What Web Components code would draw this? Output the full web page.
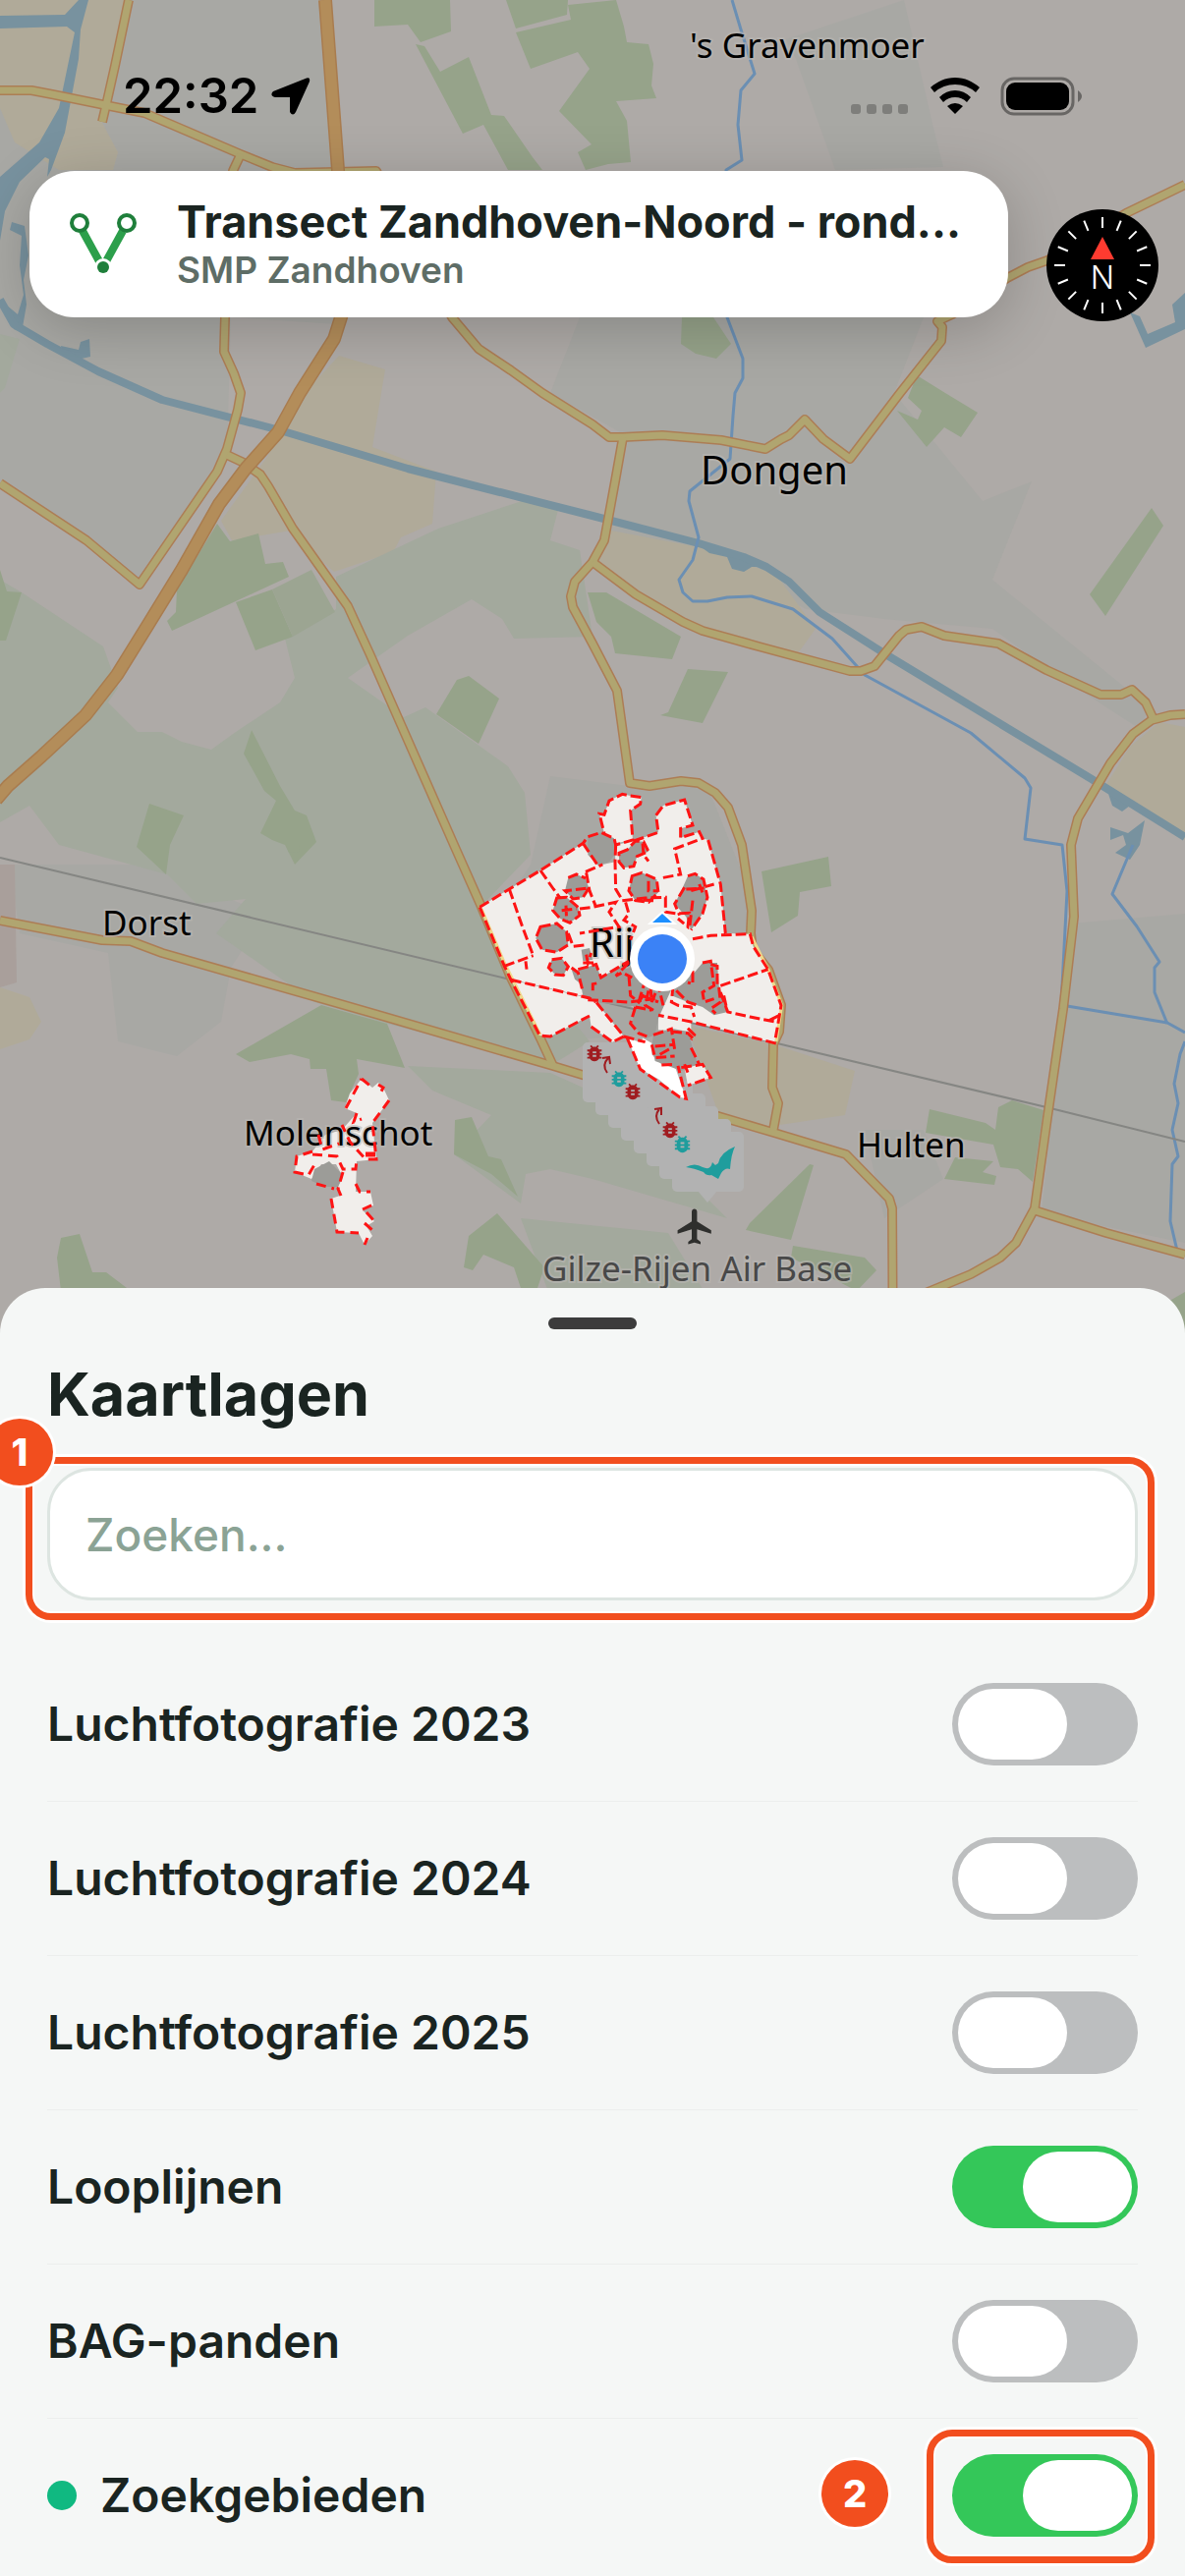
<!DOCTYPE html>
<html lang="nl">
<head>
<meta charset="utf-8">
<meta name="viewport" content="width=device-width, initial-scale=1">
<title>Kaartlagen</title>
<style>
    body {
        margin: 0;
        background: #f5f7f6;
        color: #1a2421;
        font-family: Inter, "Liberation Sans", sans-serif;
    }
</style>
</head>
<body>
<layers-screen>
    <survey-map slot="map"></survey-map>
    <status-bar slot="top" time="22:32"></status-bar>
    <project-card slot="header">
        Transect Zandhoven-Noord - rond...
        <span slot="client">SMP Zandhoven</span>
    </project-card>
    <map-compass slot="header"></map-compass>
    <bottom-sheet slot="sheet">
        <span slot="title">Kaartlagen</span>
        <callout-frame slot="search" number="1" style="--top: -11px; --right: -17px; --bottom: -20px; --left: -22px; --badge-x: -62px; --badge-y: -50px">
            <search-field placeholder="Zoeken..."></search-field>
        </callout-frame>
        <layer-row>Luchtfotografie 2023</layer-row>
        <layer-row>Luchtfotografie 2024</layer-row>
        <layer-row>Luchtfotografie 2025</layer-row>
        <layer-row on>Looplijnen</layer-row>
        <layer-row>BAG-panden</layer-row>
        <layer-row on dot="#10b981" callout="2">Zoekgebieden</layer-row>
    </bottom-sheet>
</layers-screen>

<script>
class BaseElement extends HTMLElement {
    constructor() {
        super();
        this.attachShadow({ mode: 'open' });
    }

    connectedCallback() {
        this.shadowRoot.innerHTML = this.render();
    }
}

class LayersScreen extends BaseElement {
    render() {
        return `
            <style>
                :host { display: block; overflow: hidden; }
                .stage { display: grid; grid-template-columns: minmax(0, 1fr); }
                .map, .overlay { grid-area: 1 / 1; }
                .overlay { display: flex; flex-direction: column; z-index: 1; }
                .header {
                    display: flex;
                    align-items: flex-start;
                    gap: 39px;
                    padding: 56px 27px 0 30px;
                }
                /* the sheet slides over the lower edge of the map */
                .sheet { position: relative; z-index: 2; margin-top: -89px; }
            </style>
            <div class="stage">
                <div class="map"><slot name="map"></slot></div>
                <div class="overlay">
                    <slot name="top"></slot>
                    <div class="header"><slot name="header"></slot></div>
                </div>
            </div>
            <div class="sheet"><slot name="sheet"></slot></div>
        `;
    }
}

class StatusBar extends BaseElement {
    render() {
        return `
            <style>
                :host {
                    display: flex;
                    justify-content: space-between;
                    align-items: center;
                    padding: 78px 104px 0 125px;
                    color: #000;
                }
                .group { display: flex; align-items: center; height: 40px; }
                .left { gap: 13px; }
                .right { gap: 21px; }
                time { font-size: 49px; line-height: 40px; font-weight: 600; }
                svg { display: block; }
            </style>
            <div class="group left">
                <time>${this.getAttribute('time')}</time>
                <svg width="40" height="40" viewBox="0 0 40 40">
                    <path d="M36 1.500Q40 0 39 5L25 36Q22 41 19 36V21H4Q-2 19 2 15Z"/>
                </svg>
            </div>
            <div class="group right">
                <svg width="60" height="40" viewBox="0 0 60 40" fill="#000" fill-opacity=".25">
                    <rect y="28" width="10" height="10" rx="3"/>
                    <rect x="16" y="28" width="10" height="10" rx="3"/>
                    <rect x="32" y="28" width="10" height="10" rx="3"/>
                    <rect x="48" y="28" width="10" height="10" rx="3"/>
                </svg>
                <svg width="50" height="40" viewBox="0 0 50 40">
                    <path d="M25 1C15 1 7 5 0 11L4 16Q13 8 25 8T46 16L50 11C43 5 35 1 25 1ZM25 14Q16 14 9 21L13 26Q18 21 25 21T37 26L41 21Q34 14 25 14ZM25 27Q21 27 17 30L25 38L33 30Q29 27 25 27Z"/>
                </svg>
                <svg width="84" height="40" viewBox="0 0 84 40">
                    <rect x="2" y="2" width="72" height="36" rx="12" fill="none" stroke="#000" stroke-opacity=".4" stroke-width="3"/>
                    <rect x="6" y="6" width="64" height="28" rx="9"/>
                    <path d="M79 14Q83 17 83 20T79 26Z" fill-opacity=".4"/>
                </svg>
            </div>
        `;
    }
}

class ProjectCard extends BaseElement {
    render() {
        return `
            <style>
                :host {
                    flex: 1;
                    min-width: 0;
                    display: flex;
                    align-items: center;
                    gap: 40px;
                    box-sizing: border-box;
                    height: 149px;
                    padding: 0 30px 0 40px;
                    border-radius: 46px;
                    background: #fff;
                    box-shadow: 0 12px 60px rgba(0, 0, 0, .2);
                }
                svg { flex: none; display: block; }
                .text { min-width: 0; }
                .title {
                    margin: 0;
                    font-size: 45px;
                    line-height: 52px;
                    font-weight: 700;
                    white-space: nowrap;
                    overflow: hidden;
                    text-overflow: ellipsis;
                }
                .client {
                    margin: 0;
                    font-size: 37px;
                    line-height: 46px;
                    font-weight: 600;
                    color: #5e6d66;
                }
            </style>
            <svg width="70" height="64" viewBox="0 0 70 64" fill="none">
                <path d="M14 18L31 49M55 18L38 49" stroke="#2c9f4b" stroke-width="8"/>
                <circle cx="11" cy="10" r="8" fill="#fff" stroke="#1f7f3b" stroke-width="4"/>
                <circle cx="59" cy="10" r="8" fill="#fff" stroke="#1f7f3b" stroke-width="4"/>
                <circle cx="35" cy="55" r="9" fill="#fff"/>
                <circle cx="35" cy="55" r="6" fill="#1f7f3b"/>
            </svg>
            <div class="text">
                <p class="title"><slot></slot></p>
                <p class="client"><slot name="client"></slot></p>
            </div>
        `;
    }
}

class MapCompass extends BaseElement {
    render() {
        const ticks = Array.from({ length: 16 }, (_, i) =>
            `<path d="M57 8V19" transform="rotate(${i * 22.5} 57 57)"/>`).join('');
        return `
            <style>
                :host { display: block; flex: none; padding-top: 39px; }
                button {
                    display: block;
                    padding: 0;
                    border: 0;
                    border-radius: 50%;
                    background: #000;
                }
                svg { display: block; }
                text { font: 300 32px Inter, "Liberation Sans", sans-serif; }
            </style>
            <button type="button" aria-label="Kompas">
                <svg width="114" height="114" viewBox="0 0 114 114">
                    <g stroke="#fff" stroke-width="2">${ticks}</g>
                    <path d="M57 28L69 51H45Z" fill="#ff3b30"/>
                    <text x="57" y="81" fill="#fff" text-anchor="middle">N</text>
                </svg>
            </button>
        `;
    }
}

class BottomSheet extends BaseElement {
    render() {
        return `
            <style>
                :host {
                    display: block;
                    padding: 30px 48px 3px;
                    border-radius: 46px 46px 0 0;
                    background: #f5f7f6;
                }
                .handle {
                    width: 90px;
                    height: 12px;
                    margin: 0 auto;
                    border-radius: 6px;
                    background: #3c3c3c;
                }
                h1 {
                    margin: 30px 0 38px;
                    font-size: 61px;
                    line-height: 73px;
                    font-weight: 700;
                }
                .rows { display: flex; flex-direction: column; margin-top: 48px; }
            </style>
            <div class="handle"></div>
            <h1><slot name="title"></slot></h1>
            <slot name="search"></slot>
            <div class="rows"><slot></slot></div>
        `;
    }
}

class SearchField extends BaseElement {
    render() {
        const placeholder = this.getAttribute('placeholder');
        return `
            <style>
                :host { display: block; }
                input {
                    display: block;
                    width: 100%;
                    height: 135px;
                    box-sizing: border-box;
                    padding: 0 36px;
                    border: 3px solid #dde5e1;
                    border-radius: 45px;
                    background: #fff;
                    color: inherit;
                    font: 500 46px Inter, "Liberation Sans", sans-serif;
                }
                input::placeholder { color: #8ba395; opacity: 1; }
            </style>
            <input type="text" placeholder="${placeholder}" aria-label="Zoeken">
        `;
    }
}

class CalloutFrame extends BaseElement {
    render() {
        return `
            <style>
                :host { display: block; position: relative; }
                .frame {
                    position: absolute;
                    inset: var(--top) var(--right) var(--bottom) var(--left);
                    border: 7px solid #f24e1e;
                    border-radius: 26px;
                    box-shadow: 0 0 0 3px #fff, inset 0 0 0 2px #fff;
                    pointer-events: none;
                }
                .badge {
                    position: absolute;
                    left: var(--badge-x);
                    top: var(--badge-y);
                    width: 68px;
                    height: 68px;
                    border-radius: 50%;
                    background: #f24e1e;
                    box-shadow: 0 0 0 3px #fff;
                    color: #fff;
                    font-size: 38px;
                    line-height: 68px;
                    font-weight: 800;
                    text-align: center;
                }
            </style>
            <slot></slot>
            <div class="frame"></div>
            <div class="badge">${this.getAttribute('number')}</div>
        `;
    }
}

class LayerRow extends BaseElement {
    render() {
        const dot = this.getAttribute('dot');
        const callout = this.getAttribute('callout');
        const toggle = `<input id="toggle" type="checkbox" role="switch" ${this.hasAttribute('on') ? 'checked' : ''}>`;
        return `
            <style>
                :host {
                    display: flex;
                    align-items: center;
                    justify-content: space-between;
                    padding: 36px 0;
                    border-bottom: 1px solid #eceeed;
                }
                :host(:last-child) { border-bottom-color: transparent; }
                label {
                    display: flex;
                    align-items: center;
                    gap: 24px;
                    font-size: 48px;
                    line-height: 60px;
                    font-weight: 600;
                }
                .dot { width: 30px; height: 30px; border-radius: 50%; }
                input {
                    appearance: none;
                    display: block;
                    width: 189px;
                    height: 84px;
                    margin: 0;
                    padding: 6px;
                    box-sizing: border-box;
                    border-radius: 42px;
                    background: #bcbebf;
                }
                input::before {
                    content: "";
                    display: block;
                    width: 111px;
                    height: 72px;
                    border-radius: 36px;
                    background: #fff;
                }
                input:checked { background: #34c759; }
                input:checked::before { margin-left: auto; }
                callout-frame {
                    --top: -25px;
                    --right: -17px;
                    --bottom: -27px;
                    --left: -26px;
                    --badge-x: -133px;
                    --badge-y: 6px;
                }
            </style>
            <label for="toggle">
                ${dot ? `<span class="dot" style="background: ${dot}"></span>` : ''}
                <slot></slot>
            </label>
            ${callout ? `<callout-frame number="${callout}">${toggle}</callout-frame>` : toggle}
        `;
    }
}

const MAP = {
    residential: [
        '130,0 330,0 345,173 345,330 235,323 231,460 142,590 0,490 0,110 60,173 115,173 120,155 104,125',
        '590,323 940,323 910,400 1000,510 1050,490 1010,590 1170,720 1160,742 1080,690 1010,640 900,630 820,620 711,560 620,540 640,445 560,400',
        '560,790 640,800 720,800 760,900 765,960 700,1050 560,1060 500,940 540,880',
        '1090,940 1206,930 1206,1265 1060,1235',
        '10,880 150,880 270,930 235,985 225,1040 180,1075 120,1060 110,970 20,950',
        '800,40 920,0 950,130 960,170 850,173 810,60',
        '880,1150 940,1150 960,1200 900,1240'
    ],
    farmland: [
        '0,0 130,0 115,90 104,125 120,155 115,173 60,173 15,145 0,110',
        '305,400 388,400 379,455 444,480 440,533 408,547 400,562 340,582 315,560 296,540 236,550 225,530 272,465',
        '345,362 392,376 388,400 310,400',
        '622,540 711,557 790,585 830,640 812,665 772,658 695,630 603,575',
        '1206,740 1180,735 1150,760 1125,800 1206,855',
        '699,1044 787,1063 870,1090 860,1135 760,1150 730,1130',
        '0,1005 30,1015 42,1040 30,1058 0,1068'
    ],
    grass: [
        '342,587 446,538 531,510 569,515 560,550 590,560 603,648 523,650 511,630 480,610 415,647 354,690 411,730 433,720 517,780 534,807 540,870 490,922 600,1060 560,1085 394,1042 320,1020 220,950 250,915 200,920 170,890 60,860 30,820 0,837 0,590 22,603 105,658 120,700 110,715 140,745 165,745 185,755 215,763 240,745 285,715 300,690 290,650 342,620',
        '415,1085 560,1092 600,1110 700,1200 740,1240 603,1200 560,1190 535,1195 530,1225 462,1175 500,1135 440,1110',
        '530,1240 680,1255 720,1320 560,1320',
        '0,340 20,345 5,395 0,400'
    ],
    wood: [
        '381,0 458,0 459,32 428,43 415,25 381,27',
        '423,45 432,47 448,73 477,58 500,117 513,118 542,160 552,173 517,173 492,127 471,136',
        '515,0 578,0 577,15 525,29',
        '525,33 581,20 578,5 627,0 635,27 638,43 660,45 665,65 663,87 668,100 627,103 638,123 642,165 619,167 596,173 588,155 602,147 569,113 600,70 588,53 540,70',
        '694,323 726,323 744,350 729,365 708,360 693,350',
        '933,382 962,400 995,420 978,445 961,435 943,455 913,418 934,427 938,418 924,405',
        '1172,517 1184,535 1125,627 1109,605',
        '598,603 617,603 693,648 684,671 626,665 622,648 607,633',
        '700,681 741,684 715,736 672,728 680,725',
        '221,533 234,551 263,543 270,574 288,572 294,587 175,642 170,632 179,623 180,600',
        '240,613 277,600 298,648 260,662',
        '256,743 285,800 300,825 312,830 322,857 300,880 290,860 277,855 265,848 281,815 269,805 248,767',
        '152,818 187,830 173,860 169,890 139,862',
        '465,692 477,688 508,711 487,757 444,727',
        '0,580 7,602 22,603 6,652 0,652',
        '327,1023 394,1042 412,1087 363,1078 365,1093 352,1122 337,1120 332,1088 316,1088 315,1078 296,1073 254,1081 240,1073',
        '62,1260 81,1256 94,1295 108,1295 133,1314 62,1314 58,1280',
        '506,1235 554,1290 546,1314 531,1314 523,1290 492,1277 481,1293 472,1290 477,1258',
        '463,1140 480,1137 497,1177 510,1180 527,1218 500,1195 462,1175',
        '775,887 843,872 846,902 814,908 812,932 785,949',
        '946,1129 1003,1143 1013,1150 1016,1127 1030,1120 1062,1130 1051,1203 1036,1190 1018,1188 1011,1165 942,1153',
        '972,1178 1011,1182 1000,1193 1014,1197 1012,1206 961,1200',
        '824,1185 828,1186 805,1262 759,1252 763,1245',
        '807,1268 880,1280 892,1293 872,1314 805,1280',
        '1180,1330 1206,1315 1206,1360',
        '291,860 305,860 304,867 294,868'
    ],
    water: [
        '0,16 66,15 80,0 90,0 82,30 80,60 66,135 52,173 48,180 50,162 46,160 20,185 5,215 0,245 0,180 40,145 60,110 76,33 68,27 0,29',
        '12,226 25,230 29,260 24,285 27,310 23,333 50,350 14,335 0,305 18,320 24,300 20,270 22,240 10,234',
        '62,352 80,356 82,348 91,345 92,363 83,365 82,372 64,362',
        '711,555 757,567 775,577 765,577 757,582 745,579 740,567 722,563',
        '1150,318 1160,322 1168,340 1196,328 1193,310 1206,298 1206,335 1166,354',
        '1128,808 1150,820 1142,826 1132,820',
        '1130,842 1148,848 1165,835 1160,860 1150,875 1135,868 1146,860 1143,850 1130,855'
    ],
    canal: [
        '0,305 14,330 48,350 100,378 165,407 285,438 415,477 603,525 711,553 757,567 780,577 803,592 834,623 903,667 1111,793 1206,852'
    ],
    stream: [
        '745,0 754,30 768,75 754,92 751,127 755,163 739,173 740,323 756,365 756,385 748,400 746,423 743,467 702,500 701,510 711,547 705,570 691,590 695,603 705,612 720,612 740,608 765,607 807,620 847,650 880,687 988,746 1043,792 1049,802 1043,854 1081,860 1086,907 1080,1023 1188,1041 1206,1051',
        '1153,860 1132,910 1157,943 1180,979 1175,985 1175,1010 1188,1042',
        '1206,1060 1201,1073 1195,1103 1199,1123 1193,1150 1199,1177 1193,1185 1191,1243 1198,1273'
    ],
    rail: ['0,873 515,996 791,1062 1065,1127 1206,1162'],
    motorway: [
        '331,0 344,173 352,300 347,323 340,345 305,400 283,440 250,477 223,513 185,580 150,637 119,687 87,728 42,770 8,800 -4,814'
    ],
    road: [
        '0,92 32,92 53,96 107,107 147,115 245,157 277,170 300,176 383,174 460,323 487,355 520,377 552,400 603,432 620,445 634,445 674,443 734,448 779,457 795,447 803,443 819,427 838,447 865,467 916,400 958,347 959,333 954,327 969,320 1025,283 1046,272 1066,265 1146,217 1206,188',
        '131,0 117,67 108,107 104,124',
        '245,157 237,174 229,323 228,358 238,380 245,400 242,417 231,457 221,480 142,595 88,550 0,492',
        '231,463 246,470 265,483 273,495 298,538 354,617 377,667 462,860 490,923 519,993 550,1057 563,1085',
        '0,937 104,957 133,958 165,970 385,1033 563,1085 734,1137 788,1153 861,1175 905,1220 908,1230 909,1400',
        '634,445 626,490 615,550 603,572 585,592 581,607 583,618 603,655 628,703 641,797 661,800 693,795 711,797 728,807 741,822 755,860 765,927 764,950 766,967 782,987 795,1023 793,1050 787,1063 786,1107 792,1123 787,1150',
        '603,572 647,605 695,633 715,642 772,658 865,683 876,683 890,678 915,647 922,641 938,638 961,647 1016,655 1065,682 1120,707 1141,707 1152,702 1166,715 1173,730',
        '1206,727 1191,728 1172,733 1153,747 1130,777 1097,833 1090,860 1093,933 1082,1027 1066,1137 1053,1230 1034,1265 1018,1280 988,1297 920,1325',
        '1053,1232 1126,1255 1206,1277'
    ]
};

// Search areas round Rijen, on a grid of a third of a map unit
const AREAS = {
    open: [
        '55,400 145,345 240,288 370,205 430,270 468,262 470,210 525,198 600,172 593,120 615,90 680,72 705,150 668,160 668,188 725,170 735,190 752,195 790,330 805,480 880,482 890,520 935,590 975,700 965,760 955,815 700,750 700,780 600,775 600,740 510,700 370,672 150,620 130,580',
        '420,115 435,118 450,75 490,55 515,60 548,65 545,85 515,105 522,195 470,205 435,175',
        '150,622 390,678 410,690 495,795 460,812 395,765 390,732 270,795 238,792',
        '680,890 735,880 760,920 690,945'
    ],
    bright: ['505,800 545,812 553,800 580,815 580,850 610,880 650,885 685,985 665,980 600,925 545,895'],
    closed: [
        '385,185 425,172 465,190 470,235 450,262 415,272 385,240',
        '325,310 350,300 378,312 388,342 370,370 340,375 315,350',
        '290,372 320,370 355,400 360,425 330,448 300,435 278,410',
        '240,460 290,450 320,475 325,515 290,538 245,530 226,495',
        '275,560 305,556 325,582 310,608 285,606 265,585',
        '480,235 505,225 530,198 555,200 570,230 535,245 525,275 495,280 480,262',
        '520,305 550,295 595,315 600,355 570,385 530,380 510,350',
        '690,305 712,298 738,315 750,370 735,420 700,470 685,430 650,390 670,350',
        '355,590 410,575 425,615 510,565 560,570 650,560 645,640 600,740 590,790 565,800 520,760 530,705 405,690 370,672',
        '355,600 370,640 345,620 335,590',
        '710,600 735,570 780,570 785,640 812,720 770,730 735,705 690,690 640,670 660,600',
        '585,790 640,770 690,780 705,830 720,880 670,900 590,870 580,825',
        '365,530 390,525 400,560 370,565'
    ],
    outline: [
        '55,400 145,345 240,288 370,205 385,185 425,172 465,190 470,210 522,195 515,105 545,85 548,65 515,60 490,55 450,75 435,118 420,115 435,175',
        '525,198 600,172 593,120 615,90 680,72 705,150 668,160 668,188 725,170 735,190 650,222 668,300 605,312',
        '752,195 790,330 805,480 M705,497 760,487 880,482 890,520 935,590 975,700 965,760 955,815 700,750 600,730',
        '55,400 130,580 150,622 238,792 270,795 390,732 M395,765 460,812 495,795 410,690',
        '145,345 185,460 218,548 M130,580 218,548 M240,288 280,345 300,372',
        '370,205 415,272 M470,210 468,262 470,345 485,370 M380,295 390,350 408,395',
        '378,292 430,270 M360,405 400,400 470,385 450,415 480,460 360,480',
        '150,622 390,678 410,690 M385,683 510,690 590,680 M195,565 198,590',
        '325,310 350,300 378,312 M388,342 370,370 340,375 315,350Z',
        '290,372 320,370 355,400 360,425 330,448 300,435 278,410Z M318,395 320,440 M305,410 350,405',
        '240,460 290,450 320,475 325,515 290,538 245,530 226,495Z',
        '275,560 305,556 325,582 310,608 285,606 265,585Z',
        '480,235 505,225 530,198 555,200 570,230 535,245 525,275 495,280 480,262Z M552,205 555,240 570,260',
        '520,305 550,295 595,315 600,355 570,385 530,380 510,350Z M570,320 570,350 600,350 M555,378 585,380',
        '490,380 560,372 622,370 622,415 655,420 695,418 690,460 660,435 M500,385 510,420 495,440 530,460 515,500',
        '690,305 712,298 738,315 750,370 735,420 700,470 M680,340 650,390 665,425 M700,350 770,330 M725,330 735,355 M705,380 695,465 M685,345 740,342',
        '355,590 410,575 425,615 510,565 M325,480 340,520 385,515 M370,570 410,570 M380,545 385,570 395,540',
        '335,585 355,600 370,660 M400,655 400,635 415,632 M510,570 470,610 490,600 520,615 M510,610 515,670 540,690 560,660',
        '540,690 555,640 575,630 580,690 600,640 615,700 M550,670 600,690 M570,655 560,700 585,715 M590,630 610,660',
        '530,705 515,755 540,785 565,795 M530,705 580,715 M505,800 545,895 665,980 685,985 660,885 M495,795 560,812',
        '645,640 640,690 660,700 700,705 710,735 M655,655 690,690 720,700 M660,610 705,600 705,635 690,630',
        '735,570 760,565 770,640 735,660 740,690 770,680 M760,575 780,580 780,635 M790,640 935,590 M785,645 790,690 760,710 775,725',
        '790,660 812,720 880,735 965,752 M800,670 810,715 M940,745 970,730',
        '585,790 640,772 650,835 M640,780 690,785 705,800 M700,830 725,880 M590,825 645,820 M580,820 590,860 650,855 M605,850 640,830 M610,882 650,880',
        '670,890 735,880 760,920 690,945 M680,880 690,905 M690,770 710,790 700,805'
    ]
};

class SurveyMap extends BaseElement {
    polygons(name) {
        return MAP[name].map(points => `<polygon class="${name}" points="${points}"/>`).join('');
    }

    lines(name, extra = '') {
        return MAP[name].map(points => `<polyline class="${name} ${extra}" points="${points}"/>`).join('');
    }

    areas(name) {
        return AREAS[name].map(points => `<polygon class="${name}" points="${points}"/>`).join('');
    }

    pins() {
        return Array.from({ length: 8 }, (_, i) =>
            `<rect x="${593 + 13 * i}" y="${1061 + 13 * i}" width="73" height="61" rx="5"/>`).join('');
    }

    render() {
        return `
            <style>
                :host { display: block; background: #aeaaa7; }
                svg { display: block; width: 100%; }
                .residential { fill: #a8a8a4; }
                .farmland { fill: #b0aa99; }
                .grass { fill: #a3a99d; }
                .wood { fill: #96a38a; }
                .water { fill: #78929f; }
                polyline { fill: none; stroke-linejoin: round; }
                .canal { stroke: #78929f; stroke-width: 8px; }
                .stream { stroke: #6b8fb3; stroke-width: 3px; }
                .rail { stroke: #858683; stroke-width: 2px; }
                .motorway { stroke: #b38d5a; stroke-width: 11px; }
                .motorway.casing { stroke: #a97c4f; stroke-width: 14px; }
                .road { stroke: #b0a570; stroke-width: 7px; }
                .road.casing { stroke: #ad7d55; stroke-width: 10px; }
                .open { fill: #f1eeeb; }
                .bright { fill: #fff; }
                .closed { fill: #9c9c98; }
                .outline { fill: none; stroke: #fe1414; stroke-width: 9px; stroke-dasharray: 32 12; }
                .place { font-family: "Noto Sans", "Open Sans", sans-serif; font-size: 35px; paint-order: stroke; stroke: #b9b6b3; stroke-opacity: .6; stroke-width: 4px; }
                .town { font-size: 40px; }
            </style>
            <svg viewBox="0 0 1206 1400" role="img" aria-label="Kaart">
                <defs>
                    <symbol id="bug" viewBox="0 0 24 24">
                        <path d="M20 8h-2.810c-.45-.78-1.070-1.450-1.820-1.960L17 4.410 15.590 3l-2.170 2.170C12.960 5.060 12.490 5 12 5s-.96.06-1.410.17L8.410 3 7 4.410l1.620 1.630C7.880 6.550 7.260 7.220 6.810 8H4v2h2.090c-.05.33-.09.66-.09 1v1H4v2h2v1c0 .34.04.67.09 1H4v2h2.810c1.040 1.790 2.970 3 5.190 3s4.150-1.210 5.190-3H20v-2h-2.090c.05-.33.09-.66.09-1v-1h2v-2h-2v-1c0-.34-.04-.67-.09-1H20V8zm-6 8h-4v-2h4v2zm0-4h-4v-2h4v2z"/>
                    </symbol>
                </defs>
                ${this.polygons('residential')}
                ${this.polygons('farmland')}
                ${this.polygons('grass')}
                ${this.polygons('wood')}
                <polygon points="0,880 15,880 17,1000 0,1005" fill="#a99f9b"/>
                <polygon points="277,600 317,580 341,623 298,648" fill="#9ca592"/>
                ${this.polygons('water')}
                ${this.lines('canal')}
                ${this.lines('stream')}
                ${this.lines('rail')}
                ${this.lines('road', 'casing')}
                ${this.lines('road')}
                ${this.lines('motorway', 'casing')}
                ${this.lines('motorway')}
                <text class="place" x="702" y="59">'s Gravenmoer</text>
                <text class="place town" x="713" y="493">Dongen</text>
                <text class="place" x="104" y="952">Dorst</text>
                <text class="place" x="872" y="1178">Hulten</text>
                <text class="place" x="552" y="1304" fill="#484848">Gilze-Rijen Air Base</text>

                <g fill="#b2b2b2">
                    ${this.pins()}
                    <path d="M710 1212h20l-10 12Z"/>
                </g>
                <g transform="translate(470 790) scale(.3333)">
                    ${this.areas('open')}
                    ${this.areas('bright')}
                    ${this.areas('closed')}
                    <path d="M60 405L130 570L240 790M885 490L935 590L977 700L960 810" fill="none" stroke="#f0d98c" stroke-width="9"/>
                </g>
                <polygon class="open" points="368,1098 379,1107 385,1102 390,1107 396,1120 379,1143 383,1180 363,1182 362,1213 377,1213 380,1227 369,1232 381,1243 373,1248 379,1258 371,1267 365,1255 343,1254 337,1220 346,1217 344,1208 349,1198 342,1185 327,1185 317,1200 300,1193 302,1177 318,1172 331,1155 348,1150 363,1133 351,1128 356,1113"/>
                <polygon class="closed" points="320,1190 335,1182 349,1196 344,1208 330,1208 317,1202"/>
                <text class="place" x="248" y="1166">Molenschot</text>
                <text class="place town" x="600" y="974">Rij</text>
                <g transform="translate(470 790) scale(.3333)">
                    ${AREAS.outline.map(d => `<path class="outline" d="M${d}"/>`).join('')}
                </g>
                <g fill="none" stroke="#fe1414" stroke-width="3" stroke-dasharray="10 6">
                    <path d="M368 1098L379 1107M385 1104L390 1107L387 1113M396 1120L379 1143L383 1180H372L356 1162L348 1145M352 1128L368 1098M363 1133L360 1142L368 1139M324 1155L328 1170L345 1164M318 1172L302 1177L300 1193L314 1196L322 1182M318 1175L343 1177L349 1190L362 1190L363 1180M322 1205L340 1210M349 1193L344 1210L347 1217M337 1220L343 1254L365 1255M362 1205L366 1213L377 1213M369 1231L380 1226M373 1234L381 1243M371 1245L379 1252M374 1260L371 1267"/>
                    <path d="M372 1175H383V1180" stroke-width="5"/>
                </g>

                <g fill="#a01c20">
                    <use href="#bug" x="594" y="1061" width="22" height="22"/>
                    <use href="#bug" x="633" y="1100" width="22" height="22"/>
                    <use href="#bug" x="671" y="1139" width="22" height="22"/>
                </g>
                <g fill="#1f9d9d">
                    <use href="#bug" x="619" y="1087" width="22" height="22"/>
                    <use href="#bug" x="683" y="1153" width="23" height="23"/>
                    <path d="M698 1188Q707 1183 715 1188Q722 1191 724 1186L725 1183L728 1186L731 1184Q733 1173 748 1167Q744 1175 743 1190Q738 1188 734 1194L731 1200L724 1196Q719 1197 716 1193Q706 1189 698 1188Z"/>
                </g>
                <g fill="none" stroke="#a01c20" stroke-width="2">
                    <path d="M618 1092Q612 1084 619 1077M613 1077L620 1076L621 1083"/>
                    <path d="M671 1144Q665 1136 671 1129M666 1129L673 1128L673 1135"/>
                </g>
                <g transform="translate(686 1227) scale(1.800)" fill="#2f2f2d">
                    <path d="M21 16v-2l-8-5V3.500c0-.83-.67-1.500-1.500-1.500S10 2.670 10 3.500V9l-8 5v2l8-2.500V19l-2 1.500V22l3.500-1 3.500 1v-1.500L13 19v-5.500l8 2.500z"/>
                </g>

                <path d="M674 930L684 939H664Z" fill="#1e90ff" stroke="#fff" stroke-width="4" paint-order="stroke"/>
                <circle cx="674" cy="976" r="33" fill="#fff"/>
                <circle cx="674" cy="976" r="25" fill="#3b82f6"/>
            </svg>
        `;
    }
}

customElements.define('layers-screen', LayersScreen);
customElements.define('survey-map', SurveyMap);
customElements.define('status-bar', StatusBar);
customElements.define('project-card', ProjectCard);
customElements.define('map-compass', MapCompass);
customElements.define('bottom-sheet', BottomSheet);
customElements.define('search-field', SearchField);
customElements.define('callout-frame', CalloutFrame);
customElements.define('layer-row', LayerRow);
</script>
</body>
</html>
